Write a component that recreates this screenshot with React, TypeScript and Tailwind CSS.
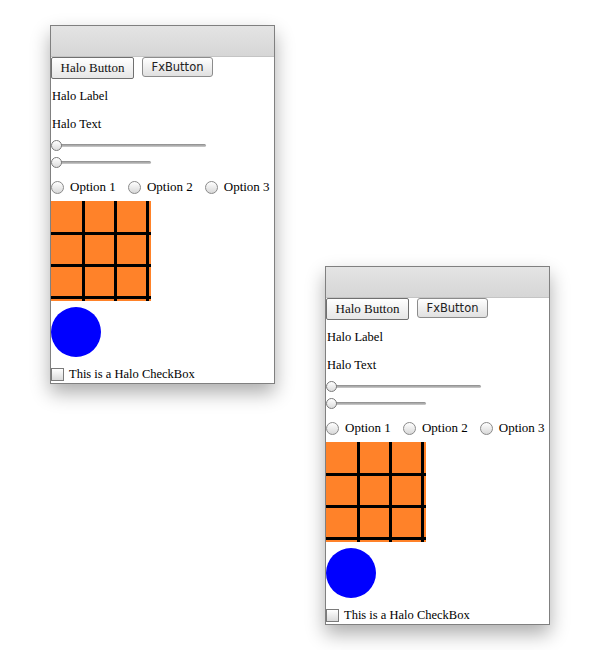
const serif = "font-['Liberation_Serif',serif]";

function Slider({ width }: { width: string }) {
  return (
    <div className={`relative h-[11px] ${width}`}>
      <div className="absolute left-[2px] right-0 top-[4px] h-[3px] rounded-full bg-gradient-to-b from-[#8a8a8a] to-[#cfcfcf]" />
      <div className="absolute left-0 top-0 h-[11px] w-[11px] rounded-full border border-[#7a7a7a] bg-gradient-to-b from-white to-[#dcdcdc]" />
    </div>
  );
}

function Radio({ label }: { label: string }) {
  return (
    <div className="flex items-center gap-[6px]">
      <div className="h-[13px] w-[13px] rounded-full border border-[#8a8a8a] bg-gradient-to-b from-white to-[#d8d8d8]" />
      <span>{label}</span>
    </div>
  );
}

function Window({ pos }: { pos: string }) {
  return (
    <div className={`absolute ${pos} flex h-[359px] w-[225px] flex-col border border-[#808080] bg-white shadow-[0_9px_18px_rgba(0,0,0,0.32)]`}>
      <div className="h-[31px] shrink-0 border-b border-[#c4c4c4] bg-gradient-to-b from-[#e4e4e4] to-[#d6d6d6]" />
      <div className={`flex flex-col text-[12.5px] leading-[16px] text-black ${serif}`}>
        <div className="flex items-start gap-[8px]">
          <button className="h-[22px] w-[83px] rounded-[2px] border border-[#707070] bg-gradient-to-b from-white to-[#e6e6e6] text-[13px] leading-[20px] text-[#111]">
            Halo Button
          </button>
          <button className="h-[20px] w-[71px] rounded-[3px] border border-[#8c8c8c] bg-gradient-to-b from-white to-[#e0e0e0] font-['DejaVu_Sans',sans-serif] text-[11.5px] leading-[18px] text-[#222]">
            FxButton
          </button>
        </div>
        <div className="mt-[9px] pl-[1px]">Halo Label</div>
        <div className="mt-[12px] pl-[1px]">Halo Text</div>
        <div className="mt-[8px]">
          <Slider width="w-[155px]" />
        </div>
        <div className="mt-[6px]">
          <Slider width="w-[100px]" />
        </div>
        <div className="mt-[11px] flex items-center gap-[12px] text-[13px]">
          <Radio label="Option 1" />
          <Radio label="Option 2" />
          <Radio label="Option 3" />
        </div>
        <div className="mt-[6px] grid h-[100px] w-[100px] grid-cols-[31px_29px_29px_2px] grid-rows-[31px_29px_29px_2px] gap-[3px] overflow-hidden bg-black">
          {Array.from({ length: 16 }).map((_, i) => (
            <div key={i} className="bg-[#ff8229]" />
          ))}
        </div>
        <div className="mt-[6px] h-[50px] w-[50px] rounded-full bg-[#0000ff]" />
        <div className="mt-[9px] flex items-center gap-[5px]">
          <div className="h-[13px] w-[13px] border border-[#7a7a7a] bg-gradient-to-b from-white to-[#dadada]" />
          <span>This is a Halo CheckBox</span>
        </div>
      </div>
    </div>
  );
}

export default function App() {
  return (
    <div className="relative h-[650px] w-[600px] overflow-hidden bg-white">
      <Window pos="left-[50px] top-[25px]" />
      <Window pos="left-[325px] top-[266px]" />
    </div>
  );
}
